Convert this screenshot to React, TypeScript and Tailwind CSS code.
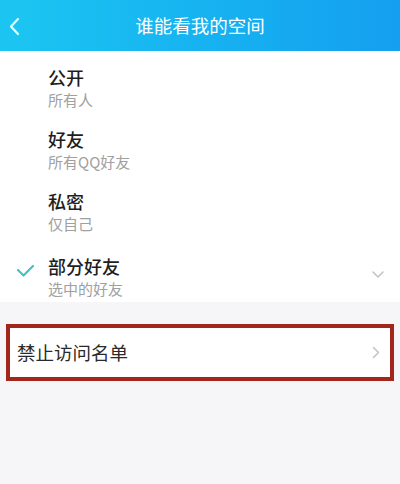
import React from "react";

const items = [
  { t: "公开", s: "所有人" },
  { t: "好友", s: "所有QQ好友" },
  { t: "私密", s: "仅自己" },
];

export default function App() {
  return (
    <div
      className="w-[400px] h-[484px] bg-[#f6f6f8] flex flex-col"
      style={{ fontFamily: '"Noto Sans CJK SC", "Noto Sans", sans-serif' }}
    >
      <div className="h-[51px] shrink-0 bg-gradient-to-r from-[#1cc6f1] to-[#159ff0] relative flex items-center justify-center">
        <svg className="absolute left-[8px] top-[17px]" width="12" height="19" viewBox="0 0 12 19">
          <path d="M10 2 L3 9.5 L10 17" fill="none" stroke="#e8fbff" strokeWidth="2.2" strokeLinecap="round" strokeLinejoin="round" />
        </svg>
        <span className="text-white text-[18.5px] leading-none">谁能看我的空间</span>
      </div>
      <div className="bg-white pt-[6px] pb-[2px] flex flex-col">
        {items.map((it) => (
          <div key={it.t} className="py-[8px] pl-[48px] flex flex-col">
            <span className="text-[18px] leading-[24px] text-[#1e1e1e] font-medium">{it.t}</span>
            <span className="text-[15px] leading-[22px] text-[#a0a0a0]">{it.s}</span>
          </div>
        ))}
        <div className="mt-[3px] pt-[8px] relative pl-[48px] flex flex-col">
          <svg className="absolute left-[16px] top-[18px]" width="19" height="14" viewBox="0 0 19 14">
            <path d="M2 6 L7.5 11.5 L17 2" fill="none" stroke="#45c2bf" strokeWidth="2.2" strokeLinecap="round" strokeLinejoin="round" />
          </svg>
          <svg className="absolute right-[15px] top-[24px]" width="14" height="9" viewBox="0 0 14 9">
            <path d="M2 2 L7 7 L12 2" fill="none" stroke="#c4c4c4" strokeWidth="1.6" strokeLinecap="round" strokeLinejoin="round" />
          </svg>
          <span className="text-[18px] leading-[24px] text-[#1e1e1e] font-medium">部分好友</span>
          <span className="text-[15px] leading-[22px] text-[#a0a0a0]">选中的好友</span>
        </div>
      </div>
      <div className="mt-[22px] mx-[6px] h-[57px] border-[4px] border-[#a3261c] bg-white flex items-center justify-between pl-[7px] pr-[10px]">
        <span className="text-[18.5px] text-[#2a2a2a]">禁止访问名单</span>
        <svg width="8" height="13" viewBox="0 0 8 13">
          <path d="M1.5 1.5 L6.5 6.5 L1.5 11.5" fill="none" stroke="#c4c4c4" strokeWidth="1.6" strokeLinecap="round" strokeLinejoin="round" />
        </svg>
      </div>
    </div>
  );
}
